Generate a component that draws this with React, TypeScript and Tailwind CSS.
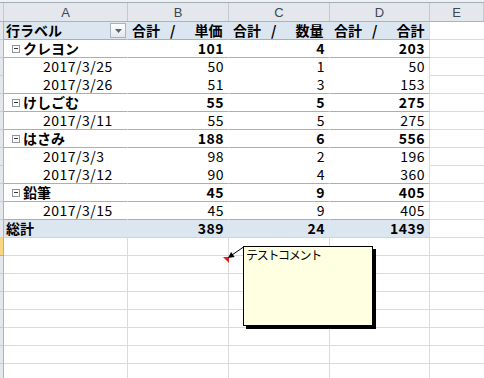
import React from 'react';

type Kind = 'head' | 'group' | 'item' | 'total';
type PivotRow = { kind: Kind; label: string; vals: string[] };

const pivot: PivotRow[] = [
  { kind: 'head', label: '行ラベル', vals: ['単価', '数量', '合計'] },
  { kind: 'group', label: 'クレヨン', vals: ['101', '4', '203'] },
  { kind: 'item', label: '2017/3/25', vals: ['50', '1', '50'] },
  { kind: 'item', label: '2017/3/26', vals: ['51', '3', '153'] },
  { kind: 'group', label: 'けしごむ', vals: ['55', '5', '275'] },
  { kind: 'item', label: '2017/3/11', vals: ['55', '5', '275'] },
  { kind: 'group', label: 'はさみ', vals: ['188', '6', '556'] },
  { kind: 'item', label: '2017/3/3', vals: ['98', '2', '196'] },
  { kind: 'item', label: '2017/3/12', vals: ['90', '4', '360'] },
  { kind: 'group', label: '鉛筆', vals: ['45', '9', '405'] },
  { kind: 'item', label: '2017/3/15', vals: ['45', '9', '405'] },
  { kind: 'total', label: '総計', vals: ['389', '24', '1439'] },
];

const grid = 'grid grid-cols-[4px_124px_101px_101px_100px_1fr]';

const Collapse = () => (
  <span className="mr-[3px] flex h-[8px] w-[8px] items-center justify-center border border-[#8e959e] bg-white">
    <span className="h-px w-[4px] bg-[#333]" />
  </span>
);

const Dropdown = () => (
  <span className="mr-px flex h-[15px] w-[16px] items-center justify-center border border-[#a9b2bd] bg-gradient-to-b from-white to-[#e3e7ec]">
    <svg width="7" height="4" viewBox="0 0 7 4">
      <polygon points="0,0 7,0 3.5,4" fill="#5a6270" />
    </svg>
  </span>
);

const RowHead = ({ active }: { active?: boolean }) => (
  <div
    className={
      active
        ? 'h-[18px] border-r border-b border-r-[#e3a93a] border-b-[#e3a93a] bg-[#f9d682]'
        : 'h-[18px] border-r border-b border-r-[#9eb6ce] border-b-[#c5ccd4] bg-[#e4e8ed]'
    }
  />
);

const PivotLine = ({ row, next }: { row: PivotRow; next?: PivotRow }) => {
  const filled = row.kind === 'head' || row.kind === 'total';
  const bold = row.kind !== 'item';
  const blue =
    row.kind === 'head' ||
    row.kind === 'group' ||
    next?.kind === 'group' ||
    next?.kind === 'total';
  const base = [
    'h-[18px] border-b border-r flex items-center leading-[17px] text-[14px] text-black',
    filled ? 'bg-[#dce6f1]' : 'bg-white',
    row.kind === 'total' ? 'border-b-[#c9d5e4]' : blue ? 'border-b-[#95b3d7]' : 'border-b-white',
    bold ? 'font-bold' : 'font-normal',
  ].join(' ');

  return (
    <>
      <RowHead />
      <div className={`${base} border-r-transparent justify-between`}>
        {row.kind === 'head' && (
          <>
            <span className="pl-[2px]">{row.label}</span>
            <Dropdown />
          </>
        )}
        {row.kind === 'group' && (
          <span className="flex items-center pl-[8px]">
            <Collapse />
            {row.label}
          </span>
        )}
        {row.kind === 'item' && <span className="pl-[39px] tracking-[0.5px]">{row.label}</span>}
        {row.kind === 'total' && <span className="pl-[2px]">{row.label}</span>}
      </div>
      {row.vals.map((v, i) => (
        <div
          key={i}
          className={`${base} ${i === 2 ? 'border-r-[#d9dbde]' : 'border-r-transparent'} ${
            row.kind === 'head' ? 'justify-start pl-[4px]' : 'justify-end pr-[4px] tracking-[0.5px]'
          }`}
        >
          {row.kind === 'head' ? (
            <>
              合計<span className="ml-[10px] mr-[19px]">/</span>
              {v}
            </>
          ) : (
            v
          )}
        </div>
      ))}
      <div className="h-[18px] border-b border-b-[#d9dbde] bg-white" />
    </>
  );
};

const BlankLine = ({ active }: { active?: boolean }) => (
  <>
    <RowHead active={active} />
    <div className="h-[18px] border-r border-b border-[#d9dbde] bg-white" />
    <div className="h-[18px] border-r border-b border-[#d9dbde] bg-white" />
    <div className="h-[18px] border-r border-b border-[#d9dbde] bg-white" />
    <div className="h-[18px] border-r border-b border-[#d9dbde] bg-white" />
    <div className="h-[18px] border-b border-[#d9dbde] bg-white" />
  </>
);

export default function App() {
  return (
    <div className="relative h-[378px] w-[484px] overflow-hidden bg-white font-['Noto_Sans_CJK_JP',sans-serif]">
      <div className="h-[2px] bg-[#eef1f4]" />
      {/* column letters */}
      <div className={`${grid} h-[20px] border-t border-b border-t-[#a4adb8] border-b-[#9eb6ce] bg-[#e4e8ed] font-['Liberation_Sans',sans-serif] text-[13px] text-[#3e4754]`}>
        <div className="border-r border-[#c2c9d1]" />
        {['A', 'B', 'C', 'D', 'E'].map((c) => (
          <div key={c} className="flex items-center justify-center border-r border-[#c2c9d1] leading-none">
            {c}
          </div>
        ))}
      </div>

      <div className={grid}>
        {pivot.map((r, i) => (
          <PivotLine key={i} row={r} next={pivot[i + 1]} />
        ))}
        {Array.from({ length: 8 }).map((_, i) => (
          <BlankLine key={i} active={i === 0} />
        ))}
      </div>

      {/* comment marker and leader arrow */}
      <svg className="absolute left-[220px] top-[243px]" width="30" height="24" viewBox="0 0 30 24">
        <polygon points="3,14 9,14 9,20" fill="#e01b1b" />
        <line x1="23.5" y1="4" x2="12" y2="12" stroke="#000" strokeWidth="1" />
        <polygon points="8,15 14.6,13.9 11.1,9" fill="#000" />
      </svg>

      {/* comment box */}
      <div className="absolute left-[243px] top-[246px] h-[80px] w-[130px] border border-black bg-[#ffffe1] shadow-[3px_3px_0_#000]">
        <div className="pl-[2px] pt-px text-[12px] leading-[14px] tracking-[-1.3px] text-black">テストコメント</div>
      </div>
    </div>
  );
}
